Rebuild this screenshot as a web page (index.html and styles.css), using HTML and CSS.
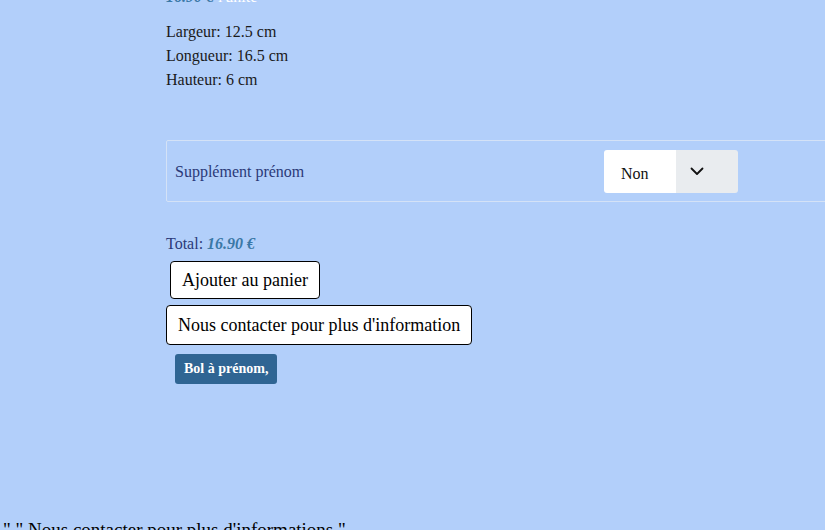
FILE: index.html
```html
<!DOCTYPE html>
<html lang="fr">

<head>
  <meta charset="UTF-8">
  <meta name="viewport" content="width=device-width, initial-scale=1.0">
  <title>Bol à prénom</title>
  <link rel="stylesheet" href="styles.css">
</head>

<body>
  <div class="product">
    <p class="unit-price"><span class="price">16.90 €</span> l'unité</p>

    <div class="specs">
      <p>Largeur: 12.5 cm</p>
      <p>Longueur: 16.5 cm</p>
      <p>Hauteur: 6 cm</p>
    </div>

    <div class="option-row">
      <label for="prenom" class="option-label">Supplément prénom</label>
      <div class="select-box">
        <span class="select-value">Non</span>
        <span class="select-arrow">
          <svg width="14" height="9" viewBox="0 0 14 9">
            <path d="M1.5 1.5 L7 7 L12.5 1.5" fill="none" stroke="#111" stroke-width="1.8" stroke-linecap="round" stroke-linejoin="round" />
          </svg>
        </span>
      </div>
    </div>

    <p class="total">Total: <span class="price">16.90 €</span></p>

    <div class="actions">
      <button class="btn btn-cart">Ajouter au panier</button>
      <button class="btn btn-contact">Nous contacter pour plus d'information</button>
      <span class="tag">Bol à prénom,</span>
    </div>
  </div>

  <p class="contact-note">" " Nous contacter pour plus d'informations "</p>
</body>

</html>
```

FILE: styles.css
```css
html,
body {
  overflow: hidden;
}

body {
  margin: 0;
  background-color: #b2cffa;
  font-family: "Liberation Serif", "Times New Roman", serif;
  color: #1a1a1a;
}

.product {
  padding-left: 166px;
}

.unit-price {
  margin: -15px 0 0;
  font-size: 16px;
  line-height: 24px;
  color: #ffffff;
}

.price {
  color: #3a78a6;
  font-style: italic;
  font-weight: bold;
}

.specs {
  margin-top: 11px;
}

.specs p {
  margin: 0;
  font-size: 16px;
  line-height: 24px;
}

.option-row {
  display: flex;
  align-items: center;
  margin: 48px -40px 0 0;
  padding: 9px 8px 8px;
  border: 1px solid #d4e2f6;
  border-radius: 2px;
}

.option-label {
  width: 429px;
  font-size: 16px;
  color: #2b3a78;
}

.select-box {
  display: flex;
  height: 43px;
  border-radius: 3px;
  overflow: hidden;
}

.select-value {
  display: flex;
  align-items: center;
  width: 55px;
  padding: 5px 0 0 17px;
  background-color: #ffffff;
  font-size: 16px;
  color: #111;
}

.select-arrow {
  display: flex;
  align-items: center;
  width: 48px;
  padding-left: 14px;
  background-color: #e9ecef;
}

.total {
  margin: 34px 0 0;
  font-size: 16px;
  line-height: 16px;
  color: #2b3a78;
}

.actions {
  display: flex;
  flex-direction: column;
  align-items: flex-start;
  margin-top: 9px;
}

.btn {
  padding: 8px 11px;
  font-family: "Liberation Serif", "Times New Roman", serif;
  font-size: 18px;
  line-height: 20px;
  color: #000;
  background-color: #ffffff;
  border: 1px solid #000;
  border-radius: 4px;
}

.btn-cart {
  margin: 0 0 6px 4px;
}

.btn-contact {
  padding: 9px 11px;
}

.tag {
  margin: 9px 0 0 9px;
  padding: 7px 9px;
  font-size: 14px;
  line-height: 16px;
  font-weight: bold;
  color: #ffffff;
  background-color: #2f6593;
  border-radius: 3px;
}

.contact-note {
  margin: 136px 0 0 3px;
  font-size: 19px;
  line-height: 20px;
  color: #000;
}
```
